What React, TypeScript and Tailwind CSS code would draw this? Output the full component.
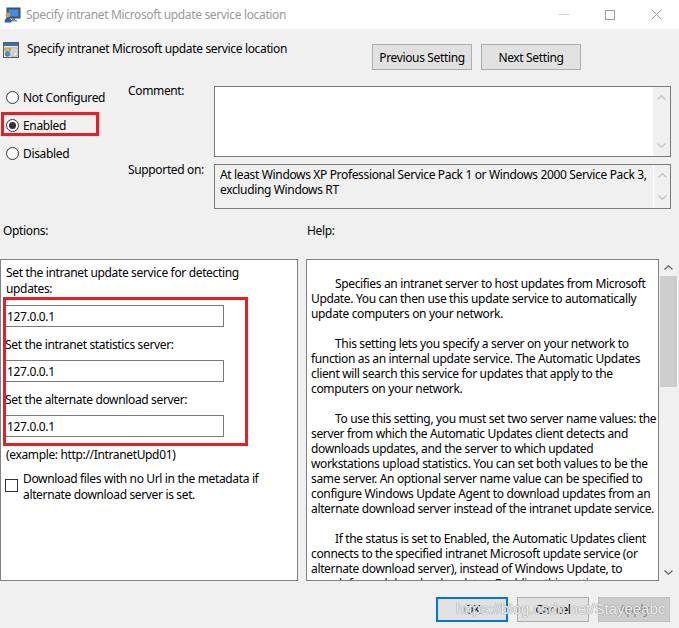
import React from 'react';

const helpParagraphs: string[][] = [
  [
    'Specifies an intranet server to host updates from Microsoft',
    'Update. You can then use this update service to automatically',
    'update computers on your network.',
  ],
  [
    'This setting lets you specify a server on your network to',
    'function as an internal update service. The Automatic Updates',
    'client will search this service for updates that apply to the',
    'computers on your network.',
  ],
  [
    'To use this setting, you must set two server name values: the',
    'server from which the Automatic Updates client detects and',
    'downloads updates, and the server to which updated',
    'workstations upload statistics. You can set both values to be the',
    'same server. An optional server name value can be specified to',
    'configure Windows Update Agent to download updates from an',
    'alternate download server instead of the intranet update service.',
  ],
  [
    'If the status is set to Enabled, the Automatic Updates client',
    'connects to the specified intranet Microsoft update service (or',
    'alternate download server), instead of Windows Update, to',
    'search for and download updates. Enabling this setting means',
  ],
];

const Chevron = ({ up, color }: { up?: boolean; color: string }) => (
  <svg width="9" height="5" viewBox="0 0 9 5" className="block">
    <path
      d={up ? 'M0.5 4.5 L4.5 0.8 L8.5 4.5' : 'M0.5 0.5 L4.5 4.2 L8.5 0.5'}
      fill="none"
      stroke={color}
      strokeWidth="1.2"
    />
  </svg>
);

const Radio = ({ label, checked }: { label: string; checked?: boolean }) => (
  <div className="flex h-[28px] items-center">
    <div className="ml-[6px] flex h-[13px] w-[13px] items-center justify-center rounded-full border border-[#333333] bg-white">
      {checked && <div className="h-[7px] w-[7px] rounded-full bg-[#333333]" />}
    </div>
    <span className="ml-[4px] leading-[15px]">{label}</span>
  </div>
);

const TextInput = ({ value }: { value: string }) => (
  <div className="flex h-[22px] w-[219px] items-center border border-[#7a7a7a] bg-white pl-[1px] leading-[15px]">
    {value}
  </div>
);

const TitleIcon = () => (
  <svg width="17" height="16" viewBox="0 0 17 16">
    <rect x="3" y="1" width="13" height="10" fill="#2b5797" stroke="#4a4a4a" strokeWidth="1" />
    <rect x="4.5" y="2.5" width="10" height="7" fill="#3f8ee0" />
    <rect x="8" y="11" width="3" height="2" fill="#7a7a7a" />
    <rect x="6" y="13" width="7" height="1.5" fill="#8a8a8a" />
    <circle cx="4" cy="8" r="2.4" fill="#c89a6a" />
    <path d="M0.5 15.5 Q0.5 10.8 4 10.8 Q7.5 10.8 7.5 15.5 Z" fill="#2f5fa8" />
  </svg>
);

const PolicyIcon = () => (
  <svg width="16" height="16" viewBox="0 0 16 16">
    <rect x="0.5" y="0.5" width="15" height="15" fill="#e6e6e6" stroke="#5a5a5a" />
    <rect x="1" y="1" width="14" height="3" fill="#3b6ea5" />
    <rect x="2" y="6" width="5" height="3" fill="#f2c94c" stroke="#8a6d1e" strokeWidth="0.6" />
    <rect x="8" y="6" width="6" height="8" fill="#ffffff" stroke="#7a7a7a" strokeWidth="0.6" />
    <circle cx="4.5" cy="12" r="2.3" fill="#4a90d9" stroke="#2d5f93" strokeWidth="0.6" />
    <path d="M9 8 H13 M9 10 H13 M9 12 H12" stroke="#7a7a7a" strokeWidth="0.7" />
  </svg>
);

const DialogButton = ({ label, className }: { label: string; className: string }) => (
  <div className={`flex h-[25px] w-[72px] items-center justify-center leading-[15px] ${className}`}>{label}</div>
);

export default function App() {
  return (
    <div className="relative h-[628px] w-[679px] overflow-hidden bg-[#f0f0f0] font-['Noto_Sans',sans-serif] text-[12px] tracking-[-0.35px] text-black">
      {/* title bar */}
      <div className="flex h-[29px] items-center bg-white">
        <div className="ml-[4px]">
          <TitleIcon />
        </div>
        <span className="ml-[5px] leading-[15px] text-[#9a9a9a]">Specify intranet Microsoft update service location</span>
        <div className="ml-auto flex h-full">
          <div className="flex w-[46px] items-center justify-center">
            <div className="h-[1px] w-[10px] bg-[#cfcfcf]" />
          </div>
          <div className="flex w-[46px] items-center justify-center">
            <div className="h-[10px] w-[10px] border border-[#9a9a9a]" />
          </div>
          <div className="flex w-[46px] items-center justify-center">
            <svg width="11" height="11" viewBox="0 0 11 11">
              <path d="M0.5 0.5 L10.5 10.5 M10.5 0.5 L0.5 10.5" stroke="#9a9a9a" strokeWidth="1" />
            </svg>
          </div>
        </div>
      </div>

      {/* header */}
      <div className="flex h-[51px] items-start">
        <div className="ml-[3px] mt-[13px]">
          <PolicyIcon />
        </div>
        <span className="ml-[8px] mt-[12px] leading-[15px]">Specify intranet Microsoft update service location</span>
        <div className="ml-auto mr-[98px] mt-[15px] flex gap-[9px]">
          <div className="flex h-[26px] w-[100px] items-center justify-center border border-[#adadad] bg-[#e1e1e1] leading-[15px]">
            Previous Setting
          </div>
          <div className="flex h-[26px] w-[100px] items-center justify-center border border-[#adadad] bg-[#e1e1e1] leading-[15px]">
            Next Setting
          </div>
        </div>
      </div>

      {/* state + comment */}
      <div className="flex h-[136px]">
        <div className="w-[128px] pt-[3px]">
          <Radio label="Not Configured" />
          <div className="relative">
            <Radio label="Enabled" checked />
            <div className="absolute left-[1px] top-[1px] h-[24px] w-[98px] border-[3px] border-[#ed1c24]" />
          </div>
          <Radio label="Disabled" />
        </div>
        <div className="flex flex-col">
          <div className="mt-[6px] flex">
            <div className="-mt-[3px] w-[86px] leading-[15px]">Comment:</div>
            <div className="flex h-[71px] w-[457px] border border-[#7a7a7a] bg-white">
              <div className="flex-1" />
              <div className="flex w-[17px] flex-col items-center justify-between bg-[#f0f0f0] py-[8px]">
                <Chevron up color="#c2c2c2" />
                <Chevron color="#c2c2c2" />
              </div>
            </div>
          </div>
          <div className="mt-[7px] flex">
            <div className="-mt-[2px] w-[86px] leading-[15px]">Supported on:</div>
            <div className="flex h-[45px] w-[457px] border border-[#7a7a7a] bg-[#f0f0f0]">
              <div className="flex-1 pl-[5px] pt-[2px] leading-[15px]">
                <div className="whitespace-nowrap">At least Windows XP Professional Service Pack 1 or Windows 2000 Service Pack 3,</div>
                <div className="whitespace-nowrap">excluding Windows RT</div>
              </div>
              <div className="flex w-[17px] flex-col items-center justify-between border-l border-white py-[8px]">
                <Chevron up color="#c2c2c2" />
                <Chevron color="#c2c2c2" />
              </div>
            </div>
          </div>
        </div>
      </div>

      {/* section labels */}
      <div className="flex h-[43px] pt-[7px] leading-[15px]">
        <div className="ml-[3px] w-[304px]">Options:</div>
        <div>Help:</div>
      </div>

      {/* panels */}
      <div className="flex h-[322px]">
        <div className="relative w-[298px] border border-[#828282] bg-white pl-[4px] pt-[5px]">
          <div className="pl-[1px] leading-[16px]">
            <div>Set the intranet update service for detecting</div>
            <div>updates:</div>
          </div>
          <div className="mt-[8px]">
            <TextInput value="127.0.0.1" />
          </div>
          <div className="mt-[10px] leading-[15px]">Set the intranet statistics server:</div>
          <div className="mt-[8px]">
            <TextInput value="127.0.0.1" />
          </div>
          <div className="mt-[10px] leading-[15px]">Set the alternate download server:</div>
          <div className="mt-[8px]">
            <TextInput value="127.0.0.1" />
          </div>
          <div className="mt-[10px] pl-[1px] leading-[15px]">(example: http://IntranetUpd01)</div>
          <div className="mt-[9px] flex items-start">
            <div className="mt-[8px] h-[13px] w-[13px] shrink-0 border border-[#333333] bg-white" />
            <div className="ml-[5px] leading-[16px]">
              <div>Download files with no Url in the metadata if</div>
              <div>alternate download server is set.</div>
            </div>
          </div>
          <div className="absolute left-[2px] top-[37px] h-[149px] w-[245px] border-[3px] border-[#ed1c24]" />
        </div>

        <div className="ml-[8px] w-[353px] overflow-hidden border border-[#828282] bg-white pl-[4px] pt-[16px] leading-[15px]">
          {helpParagraphs.map((para, i) => (
            <div key={i} className={i > 0 ? 'mt-[15px]' : ''}>
              {para.map((line, j) => (
                <div key={j} className={`whitespace-nowrap ${j === 0 ? 'pl-[24px]' : ''}`}>
                  {line}
                </div>
              ))}
            </div>
          ))}
        </div>

        <div className="ml-[1px] flex w-[17px] flex-col items-center">
          <div className="flex h-[17px] items-center">
            <Chevron up color="#606060" />
          </div>
          <div className="h-[111px] w-full bg-[#cdcdcd]" />
          <div className="flex-1" />
          <div className="flex h-[17px] items-center">
            <Chevron color="#606060" />
          </div>
        </div>
      </div>

      {/* footer */}
      <div className="flex justify-end gap-[9px] pr-[9px] pt-[16px]">
        <DialogButton label="OK" className="border-2 border-[#0078d7] bg-[#e1e1e1]" />
        <DialogButton label="Cancel" className="border border-[#adadad] bg-[#e1e1e1]" />
        <DialogButton label="Apply" className="border border-[#bfbfbf] bg-[#cccccc] text-[#838383]" />
      </div>

      {/* watermark */}
      <div className="pointer-events-none absolute left-[456px] top-[600px] font-['Liberation_Sans',Arial,sans-serif] text-[15px] leading-[17px] tracking-normal text-white/85 [text-shadow:0_0_1px_#8a8a8a,0_0_1px_#8a8a8a]">
        https://blog.csdn.net/Stayeeabc
      </div>
    </div>
  );
}
